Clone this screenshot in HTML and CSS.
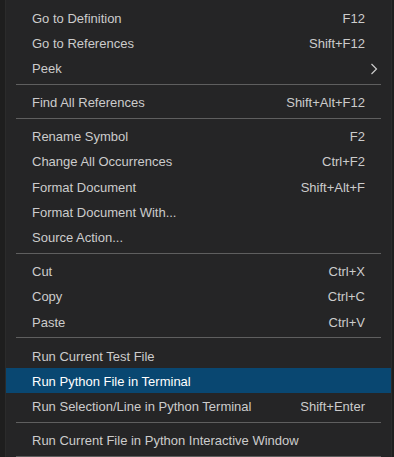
FILE: index.html
```html
<!DOCTYPE html>
<html>
<head>
<meta charset="utf-8">
<link rel="stylesheet" href="styles.css">
</head>
<body>
<div class="menu">
  <div class="item"><span class="label">Go to Definition</span><span class="key">F12</span></div>
  <div class="item"><span class="label">Go to References</span><span class="key">Shift+F12</span></div>
  <div class="item"><span class="label">Peek</span><span class="sub"><svg width="8" height="12" viewBox="0 0 8 12"><polyline points="1.5,1 6.5,6 1.5,11" fill="none" stroke="#cccccc" stroke-width="1.2"/></svg></span></div>
  <div class="sep"></div>
  <div class="item"><span class="label">Find All References</span><span class="key">Shift+Alt+F12</span></div>
  <div class="sep"></div>
  <div class="item"><span class="label">Rename Symbol</span><span class="key">F2</span></div>
  <div class="item"><span class="label">Change All Occurrences</span><span class="key">Ctrl+F2</span></div>
  <div class="item"><span class="label">Format Document</span><span class="key">Shift+Alt+F</span></div>
  <div class="item"><span class="label">Format Document With...</span></div>
  <div class="item"><span class="label">Source Action...</span></div>
  <div class="sep"></div>
  <div class="item"><span class="label">Cut</span><span class="key">Ctrl+X</span></div>
  <div class="item"><span class="label">Copy</span><span class="key">Ctrl+C</span></div>
  <div class="item"><span class="label">Paste</span><span class="key">Ctrl+V</span></div>
  <div class="sep"></div>
  <div class="item"><span class="label">Run Current Test File</span></div>
  <div class="item active"><span class="label">Run Python File in Terminal</span></div>
  <div class="item"><span class="label">Run Selection/Line in Python Terminal</span><span class="key">Shift+Enter</span></div>
  <div class="sep"></div>
  <div class="item"><span class="label">Run Current File in Python Interactive Window</span></div>
  <div class="sep"></div>
</div>
</body>
</html>
```

FILE: styles.css
```css
html, body {
  margin: 0;
  padding: 0;
  height: 100%;
  overflow: hidden;
}
body {
  background: #1e1e1e;
  font-family: "Segoe UI", "Liberation Sans", Arial, sans-serif;
  font-size: 13px;
  color: #cccccc;
  padding-left: 5px;
  padding-right: 2px;
}
.menu {
  background: #252526;
  border-left: 1px solid #2b2b2b;
  border-right: 1px solid #2b2b2b;
  padding-top: 4.5px;
  display: flex;
  flex-direction: column;
}
.item {
  box-sizing: border-box;
  height: 25.33px;
  display: flex;
  align-items: center;
  justify-content: space-between;
  padding: 2px 26px 0;
  white-space: nowrap;
}
.item.active {
  background: #094771;
  color: #ffffff;
}
.key {
  color: #cccccc;
}
.sub {
  display: flex;
  align-items: center;
  margin-right: -13px;
}
.sep {
  height: 1px;
  background: #5f5f5f;
  margin: 3.5px 10px 4px;
}
```
